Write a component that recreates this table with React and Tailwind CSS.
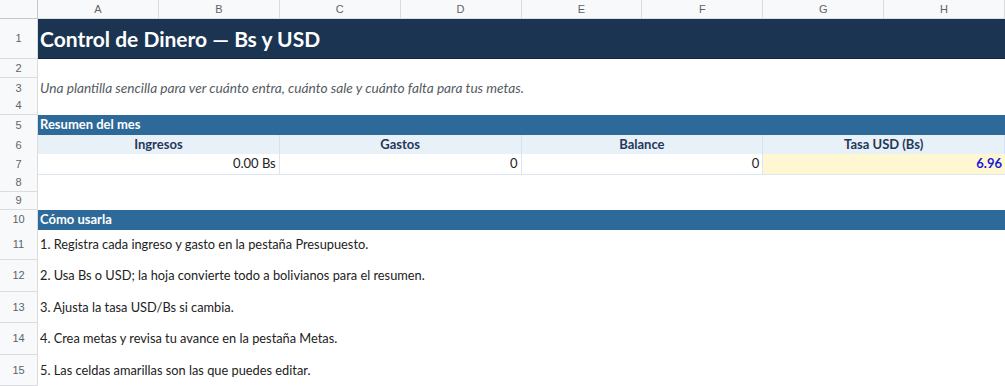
const COLS = ['A', 'B', 'C', 'D', 'E', 'F', 'G', 'H'];

const GRID = 'grid grid-cols-[38px_repeat(8,minmax(0,1fr))]';

function RowNum({ n }) {
  return (
    <div className="flex items-center justify-center border-r border-b border-[#dadce0] bg-[#f8f9fa] font-['Liberation_Sans',sans-serif] text-[11px] text-[#5f6368]">
      {n}
    </div>
  );
}

function Row({ n, h, children }) {
  return (
    <div className={`${GRID} ${h}`}>
      <RowNum n={n} />
      {children}
    </div>
  );
}

function SummaryHead({ label }) {
  return (
    <div className="col-span-2 flex items-center justify-center border-r border-b border-[#d6e2ee] bg-[#e8f0f8] text-[13px] font-bold text-[#1f3a5a]">
      {label}
    </div>
  );
}

function SummaryValue({ value, tone }) {
  const yellow = tone === 'edit';
  return (
    <div
      className={
        yellow
          ? 'col-span-2 flex items-center justify-end border-b border-[#dde6ef] bg-[#fef7d2] pr-[3px] text-[13px] font-bold text-[#1a1ad6]'
          : 'col-span-2 flex items-center justify-end border-r border-b border-[#dde6ef] bg-white pr-[3px] text-[13px] text-[#222]'
      }
    >
      {value}
    </div>
  );
}

function Step({ n, h, text }) {
  return (
    <Row n={n} h={h}>
      <div className="col-span-8 flex items-center whitespace-nowrap pl-[2px] text-[12.8px] text-[#222]">{text}</div>
    </Row>
  );
}

const STEPS = [
  'Registra cada ingreso y gasto en la pestaña Presupuesto.',
  'Usa Bs o USD; la hoja convierte todo a bolivianos para el resumen.',
  'Ajusta la tasa USD/Bs si cambia.',
  'Crea metas y revisa tu avance en la pestaña Metas.',
  'Las celdas amarillas son las que puedes editar.',
];

const STEP_HEIGHTS = ['h-[31px]', 'h-[32px]', 'h-[31px]', 'h-[32px]', 'h-[31px]'];

export default function App() {
  return (
    <div className="h-[386px] w-[1005px] overflow-hidden bg-white font-['Lato','Open_Sans',sans-serif]">
      <div className={`${GRID} h-[19px]`}>
        <div className="border-r border-b border-[#c4c7cc] bg-[#f8f9fa]" />
        {COLS.map((c) => (
          <div
            key={c}
            className="flex items-center justify-center border-r border-b border-[#dadce0] bg-[#f8f9fa] font-['Liberation_Sans',sans-serif] text-[11px] text-[#5f6368]"
          >
            {c}
          </div>
        ))}
      </div>

      <Row n={1} h="h-[40px]">
        <div className="col-span-8 flex items-center whitespace-nowrap border-b border-[#12263d] bg-[#1a3452] pl-[2px] text-[21px] font-bold text-white">
          Control de Dinero — Bs y USD
        </div>
      </Row>
      <Row n={2} h="h-[19px]">
        <div className="col-span-8" />
      </Row>
      <Row n={3} h="h-[19px]">
        <div className="col-span-8 flex items-center whitespace-nowrap pl-[2px] text-[13.7px] italic text-[#555b62]">
          Una plantilla sencilla para ver cuánto entra, cuánto sale y cuánto falta para tus metas.
        </div>
      </Row>
      <Row n={4} h="h-[18px]">
        <div className="col-span-8" />
      </Row>
      <Row n={5} h="h-[20px]">
        <div className="col-span-8 flex items-center border-b border-[#25577f] bg-[#2d6a99] pl-[2px] text-[13px] font-bold text-white">
          Resumen del mes
        </div>
      </Row>
      <Row n={6} h="h-[19px]">
        <SummaryHead label="Ingresos" />
        <SummaryHead label="Gastos" />
        <SummaryHead label="Balance" />
        <SummaryHead label="Tasa USD (Bs)" />
      </Row>
      <Row n={7} h="h-[19px]">
        <SummaryValue value="0.00 Bs" />
        <SummaryValue value="0" />
        <SummaryValue value="0" />
        <SummaryValue value="6.96" tone="edit" />
      </Row>
      <Row n={8} h="h-[19px]">
        <div className="col-span-8" />
      </Row>
      <Row n={9} h="h-[18px]">
        <div className="col-span-8" />
      </Row>
      <Row n={10} h="h-[19px]">
        <div className="col-span-8 flex items-center bg-[#2d6a99] pl-[2px] text-[13px] font-bold text-white">
          Cómo usarla
        </div>
      </Row>
      {STEPS.map((s, i) => (
        <Step key={i} n={11 + i} h={STEP_HEIGHTS[i]} text={`${i + 1}. ${s}`} />
      ))}
    </div>
  );
}
